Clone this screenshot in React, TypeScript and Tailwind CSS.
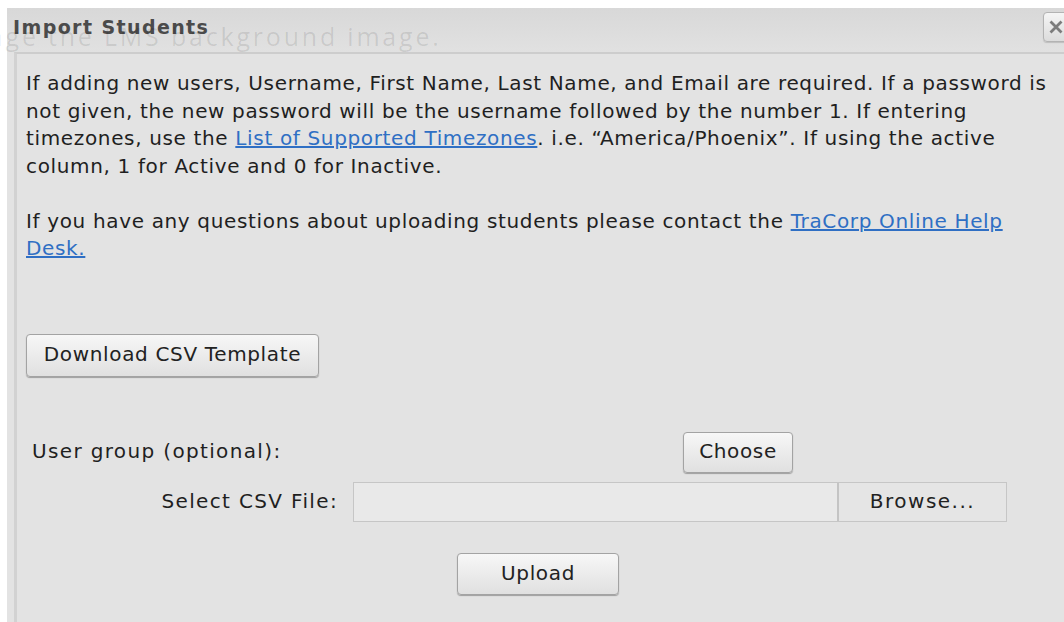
import React from "react";

const face = "font-['Verdana','DejaVu_Sans',sans-serif] text-[20px] tracking-[0.65px]";

function Btn({ children, className }: { children: React.ReactNode; className: string }) {
  return (
    <button
      className={`flex shrink-0 items-center justify-center rounded-[4px] border border-[#a3a3a3] bg-gradient-to-b from-[#f7f7f7] to-[#e0e0e0] text-[#222] shadow-[0_1px_1px_rgba(0,0,0,0.3)] ${face} ${className}`}
    >
      {children}
    </button>
  );
}

export default function App() {
  return (
    <div className={`relative flex h-[622px] w-[1064px] flex-col overflow-hidden bg-white pl-[7px] pt-[8px] ${face}`}>
      <div className="relative flex flex-1 flex-col bg-[#e3e3e3]">
        {/* title bar */}
        <div className="relative flex h-[44px] shrink-0 items-center bg-gradient-to-b from-[#d8d8d8] to-[#e1e1e1] pl-[6px]">
          <span className="mt-[-5px] font-['Tahoma','DejaVu_Sans',sans-serif] text-[19px] font-bold tracking-[1.4px] text-[#4b4b4b]">
            Import Students
          </span>
          <div className="absolute right-[-9px] top-[4px] flex h-[30px] w-[30px] items-center justify-center rounded-[4px] border border-[#b3b3b3] bg-gradient-to-b from-[#f5f5f5] to-[#dcdcdc] shadow-[0_1px_1px_rgba(0,0,0,0.15)]">
            <svg width="16" height="16" viewBox="0 0 16 16" className="ml-[-4px]">
              <path d="M2.5 2.5 L13.5 13.5 M13.5 2.5 L2.5 13.5" stroke="#7c7c7c" strokeWidth="2.8" />
            </svg>
          </div>
        </div>

        {/* content panel */}
        <div className="ml-[7px] flex flex-1 flex-col border-l-[3px] border-t-[2px] border-l-[#d2d2d2] border-t-[#cdcdcd] pl-[9px] pt-[16px] leading-[27.5px] text-[#1f1f1f]">
          <p className="whitespace-nowrap">
            If adding new users, Username, First Name, Last Name, and Email are required. If a password is
            <br />
            not given, the new password will be the username followed by the number 1. If entering
            <br />
            timezones, use the <a className="text-[#2f6fc4] underline">List of Supported Timezones</a>. i.e. “America/Phoenix”. If using the active
            <br />
            column, 1 for Active and 0 for Inactive.
          </p>
          <p className="mt-[27.5px] whitespace-nowrap">
            If you have any questions about uploading students please contact the{" "}
            <a className="text-[#2f6fc4] underline">TraCorp Online Help</a>
            <br />
            <a className="text-[#2f6fc4] underline">Desk.</a>
          </p>

          <Btn className="mt-[71px] h-[43px] w-[293px]">Download CSV Template</Btn>

          <div className="mt-[55px] flex h-[41px] items-center">
            <span className="ml-[6px] w-[651px] shrink-0 tracking-[1.35px]">User group (optional):</span>
            <Btn className="h-[41px] w-[110px]">Choose</Btn>
          </div>

          <div className="mt-[9px] flex h-[40px] items-center">
            <span className="w-[327px] shrink-0 pr-[15px] text-right tracking-[1.35px]">Select CSV File:</span>
            <div className="flex h-[40px] w-[654px] shrink-0 border border-[#c6c6c6] bg-[#e9e9e9]">
              <div className="flex-1" />
              <div className="flex w-[169px] items-center justify-center border-l-2 border-[#c4c4c4] bg-[#e5e5e5] tracking-[1.5px] text-[#222]">
                Browse...
              </div>
            </div>
          </div>

          <Btn className="ml-[431px] mt-[31px] h-[42px] w-[162px]">Upload</Btn>
        </div>
      </div>

      {/* page heading behind the dialog, showing faintly through it */}
      <div className="pointer-events-none absolute left-[-66px] top-[24px] whitespace-nowrap font-['Open_Sans',sans-serif] text-[25px] leading-none tracking-[2.8px] text-[rgba(0,0,0,0.1)]">
        Change the LMS background image.
      </div>
    </div>
  );
}
